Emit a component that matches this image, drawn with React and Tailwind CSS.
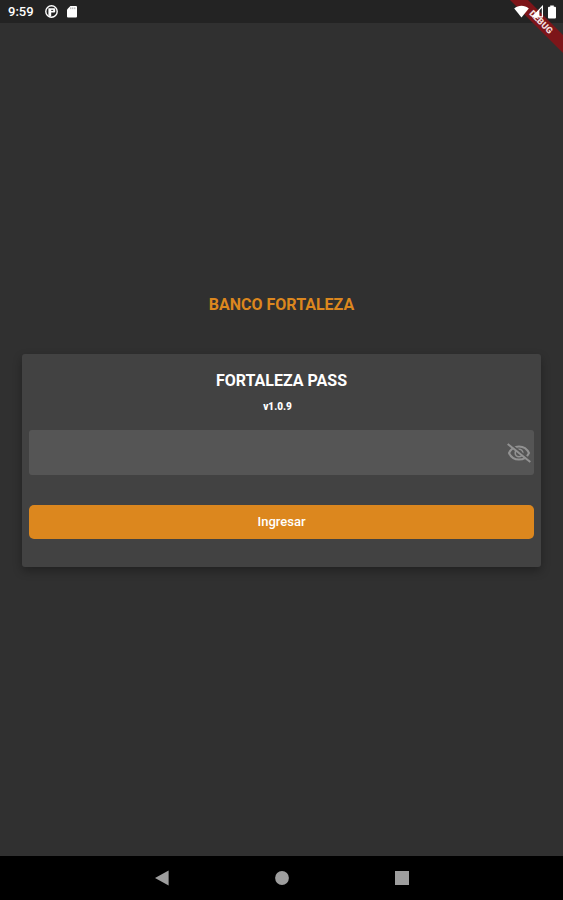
import { useState } from "react";

function StatusBar() {
  return (
    <header className="relative flex h-[23px] items-center justify-between overflow-visible bg-[#232323] pl-2 pr-[6px] text-white">
      <div className="flex items-center">
        <span className="w-[37px] text-[13px] font-medium leading-4">9:59</span>
        <svg width="13" height="13" viewBox="0 0 13 13" aria-hidden="true">
          <circle cx="6.5" cy="6.5" r="5.7" fill="none" stroke="#fff" strokeWidth="1.4" />
          <path d="M3.4 3.2H9.2a1 1 0 0 1 1 1v2.4a1 1 0 0 1-1 1H6.2v4L3.4 10.5z" fill="#fff" />
          <path d="M6.2 5.4h2" stroke="#232323" strokeWidth="1" />
        </svg>
        <svg className="ml-2" width="12" height="13" viewBox="0 0 12 13" aria-hidden="true">
          <path d="M4.4 1H10a1 1 0 0 1 1 1v9.4a1 1 0 0 1-1 1H2a1 1 0 0 1-1-1V4.6z" fill="#fff" />
          <path d="M4.8 2.4v1.8M6.8 2.4v1.8M8.8 2.4v1.8" stroke="#777" strokeWidth="0.7" />
        </svg>
      </div>
      <svg className="absolute right-0 top-0" width="53" height="53" viewBox="0 0 53 53" role="img" aria-label="DEBUG">
        <path d="M0 0h18l35 35v18z" fill="#7d1519" />
        <text
          x="31"
          y="25"
          transform="rotate(45 31 22)"
          textAnchor="middle"
          fill="#f2dede"
          className="text-[9px] font-black"
        >
          DEBUG
        </text>
      </svg>
      <div className="relative flex items-center gap-[3px]">
        <svg width="15" height="13" viewBox="0 0 15 13" aria-hidden="true">
          <path d="M0.2 3.4C4.4-0.3 10.6-0.3 14.8 3.4L7.5 12.4z" fill="#fff" />
        </svg>
        <svg width="12" height="13" viewBox="0 0 12 13" aria-hidden="true">
          <path d="M10.4 1.4v10.4H0.8z" fill="none" stroke="#fff" strokeWidth="1.2" />
          <path d="M7.4 4.4v7.4H0.8z" fill="#fff" />
        </svg>
        <svg width="10" height="14" viewBox="0 0 10 14" aria-hidden="true">
          <path d="M3.2 0.4h3.6v1.4H8a1 1 0 0 1 1 1v9.6a1 1 0 0 1-1 1H2a1 1 0 0 1-1-1V2.8a1 1 0 0 1 1-1h1.2z" fill="#fff" />
        </svg>
      </div>
    </header>
  );
}

function EyeOff() {
  return (
    <svg width="24" height="20" viewBox="0 0 24 20" fill="none" stroke="#929292" aria-hidden="true">
      <path d="M2 10C4 5.7 7.6 3.4 12 3.4S20 5.7 22 10C20 14.3 16.4 16.6 12 16.6S4 14.3 2 10z" strokeWidth="2" />
      <circle cx="12" cy="10" r="3.8" strokeWidth="1.6" />
      <path d="M2.2 0.2L24.5 18" stroke="#555555" strokeWidth="2" />
      <path d="M0.7 1L23.3 19" strokeWidth="2" />
    </svg>
  );
}

function LoginCard() {
  const [visible, setVisible] = useState(false);
  return (
    <form
      onSubmit={(e) => e.preventDefault()}
      className="mt-[38px] rounded-[3px] bg-[#424242] px-[7px] pb-7 pt-[15px] text-center text-white shadow-[0_4px_10px_rgba(0,0,0,0.3)]"
    >
      <h2 className="text-base font-bold leading-6">FORTALEZA PASS</h2>
      <p className="mt-[6px] pr-2 text-[10px] font-black leading-4">v1.0.9</p>
      <div className="mt-[15px] flex h-[45px] items-center rounded-[3px] bg-[#555555] pr-[3px]">
        <input
          type={visible ? "text" : "password"}
          aria-label="Contraseña"
          className="h-full min-w-0 flex-1 bg-transparent px-3 text-sm outline-none"
        />
        <button type="button" aria-label="Mostrar contraseña" onClick={() => setVisible(!visible)}>
          <EyeOff />
        </button>
      </div>
      <button type="submit" className="mt-[30px] h-[34px] w-full rounded-[5px] bg-[#dc871e] text-[13px] font-medium">
        Ingresar
      </button>
    </form>
  );
}

function NavBar() {
  return (
    <nav className="flex h-11 items-center justify-center gap-[104px] bg-black">
      <button type="button" aria-label="Atrás">
        <svg width="16" height="16" viewBox="0 0 16 16" aria-hidden="true">
          <path d="M14.6 0.5v15L1 8z" fill="#9e9e9e" />
        </svg>
      </button>
      <button type="button" aria-label="Inicio">
        <svg width="16" height="16" viewBox="0 0 16 16" aria-hidden="true">
          <circle cx="8" cy="8" r="6.9" fill="#9e9e9e" />
        </svg>
      </button>
      <button type="button" aria-label="Recientes">
        <svg width="16" height="16" viewBox="0 0 16 16" aria-hidden="true">
          <path d="M1 1h14v14H1z" fill="#9e9e9e" />
        </svg>
      </button>
    </nav>
  );
}

export default function App() {
  return (
    <div className="flex min-h-screen flex-col bg-[#303030] font-['Roboto',sans-serif]">
      <StatusBar />
      <main className="flex-1 px-[22px] pt-[271px]">
        <h1 className="text-center text-base font-bold leading-[22px] text-[#dc871e]">BANCO FORTALEZA</h1>
        <LoginCard />
      </main>
      <NavBar />
    </div>
  );
}
